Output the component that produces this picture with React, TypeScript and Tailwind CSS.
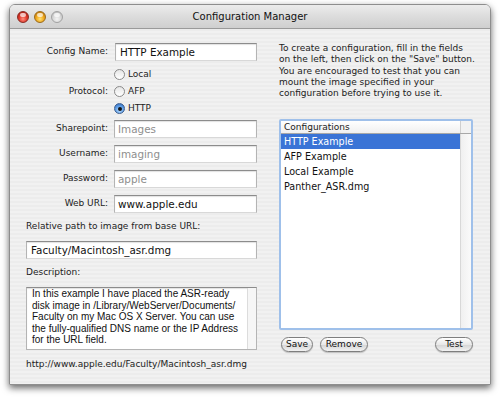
import React from "react";

const configs = ["HTTP Example", "AFP Example", "Local Example", "Panther_ASR.dmg"];

const descLines = [
  "In this example I have placed the ASR-ready",
  "disk image in /Library/WebServer/Documents/",
  "Faculty on my Mac OS X Server. You can use",
  "the fully-qualified DNS name or the IP Address",
  "for the URL field.",
];

const helpLines = [
  "To create a configuration, fill in the fields",
  'on the left, then click on the "Save" button.',
  "You are encouraged to test that you can",
  "mount the image specified in your",
  "configuration before trying to use it.",
];

function Light({ color }: { color: "red" | "yellow" | "gray" }) {
  const cls =
    color === "red"
      ? "bg-[radial-gradient(circle_at_50%_70%,#ff8f80_0%,#e0392b_45%,#9c1a10_100%)] border-[#8a2a22]"
      : color === "yellow"
      ? "bg-[radial-gradient(circle_at_50%_70%,#ffe27a_0%,#f0a81c_45%,#b06a08_100%)] border-[#9a6a1c]"
      : "bg-[radial-gradient(circle_at_50%_70%,#f4f4f4_0%,#d6d6d6_50%,#b4b4b4_100%)] border-[#a2a2a2]";
  return (
    <div className={`relative w-[12px] h-[12px] rounded-full border ${cls}`}>
      <div className="absolute left-[2px] top-[1px] w-[6px] h-[4px] rounded-full bg-white/70" />
    </div>
  );
}

function Field({ value, muted, className = "" }: { value: string; muted?: boolean; className?: string }) {
  return (
    <div
      className={`h-[18px] bg-white border border-[#b4b4b4] border-t-[#8c8c8c] border-b-[#d8d8d8] shadow-[inset_0_1px_1px_rgba(0,0,0,0.12)] flex items-center pl-[3px] text-[10.4px] leading-none ${
        muted ? "text-[#8e8e8e]" : "text-[#111]"
      } ${className}`}
    >
      {value}
    </div>
  );
}

function Radio({ label, checked }: { label: string; checked?: boolean }) {
  return (
    <div className="h-[17px] flex items-center gap-[3px]">
      {checked ? (
        <div className="w-[11px] h-[11px] rounded-full border border-[#3d5f8f] bg-[radial-gradient(circle_at_50%_70%,#bfe0ff_0%,#5a9be6_55%,#2c5fae_100%)] flex items-center justify-center">
          <div className="w-[4px] h-[4px] rounded-full bg-[#111]" />
        </div>
      ) : (
        <div className="w-[11px] h-[11px] rounded-full border border-[#8a8a8a] bg-[linear-gradient(#e6e6e6,#ffffff)]" />
      )}
      <span className="text-[9px] text-[#222]">{label}</span>
    </div>
  );
}

function PillButton({ label, width }: { label: string; width: string }) {
  return (
    <div
      className={`${width} h-[15px] rounded-full border border-[#7e7e7e] bg-[linear-gradient(#ffffff,#e8e8e8_50%,#d6d6d6_55%,#f2f2f2)] shadow-[0_1px_1px_rgba(0,0,0,0.2)] flex items-center justify-center text-[9px] text-[#111]`}
    >
      {label}
    </div>
  );
}

export default function App() {
  return (
    <div className="w-[500px] h-[398px] bg-white pt-[4px] pl-[9px] font-['DejaVu_Sans',sans-serif] text-[#222]">
      <div className="w-[482px] h-[381px] rounded-t-[6px] border border-[#8e8e8e] shadow-[0_3px_7px_rgba(0,0,0,0.6)] flex flex-col overflow-hidden">
        {/* title bar */}
        <div className="h-[24px] shrink-0 flex items-center border-b border-[#9a9a9a] bg-[linear-gradient(#ececec,#dcdcdc_50%,#cfcfcf)] px-[7px]">
          <div className="w-[60px] flex items-center gap-[5px]">
            <Light color="red" />
            <Light color="yellow" />
            <Light color="gray" />
          </div>
          <div className="flex-1 text-center text-[10px] text-[#111]">Configuration Manager</div>
          <div className="w-[60px]" />
        </div>

        {/* body */}
        <div className="flex-1 flex pl-[16px] pt-[14px] bg-[repeating-linear-gradient(to_bottom,#ececec_0px,#ececec_2px,#f1f1f1_2px,#f1f1f1_4px)]">
          {/* left column */}
          <div className="w-[231px] flex flex-col">
            <div className="grid grid-cols-[82px_143px] gap-x-[6px] items-center">
              <div className="text-right text-[9px]">Config Name:</div>
              <Field value="HTTP Example" className="ml-[1px] pl-[4px]" />
            </div>

            <div className="grid grid-cols-[82px_143px] gap-x-[6px] items-center mt-[5px]">
              <div />
              <Radio label="Local" />
              <div className="text-right text-[9px]">Protocol:</div>
              <Radio label="AFP" />
              <div />
              <Radio label="HTTP" checked />
            </div>

            <div className="grid grid-cols-[82px_143px] gap-x-[6px] gap-y-[7px] items-center mt-[3px]">
              <div className="text-right text-[9px]">Sharepoint:</div>
              <Field value="Images" muted />
              <div className="text-right text-[9px]">Username:</div>
              <Field value="imaging" muted />
              <div className="text-right text-[9px]">Password:</div>
              <Field value="apple" muted />
              <div className="text-right text-[9px]">Web URL:</div>
              <Field value="www.apple.edu" />
            </div>

            <div className="mt-[7px] h-[12px] leading-[12px] text-[9px]">
              Relative path to image from base URL:
            </div>
            <Field value="Faculty/Macintosh_asr.dmg" className="mt-[9px] pl-[4px]" />

            <div className="mt-[7px] h-[12px] leading-[12px] text-[9px]">Description:</div>

            <div className="mt-[9px] h-[63px] flex bg-white border border-[#b4b4b4] border-t-[#8c8c8c] shadow-[inset_0_1px_1px_rgba(0,0,0,0.12)] overflow-hidden">
              <div className="flex-1 pl-[5px] font-['Liberation_Sans',Arial,sans-serif] text-[10px] leading-[11.5px] text-[#111]">
                {descLines.map((line) => (
                  <div key={line} className="whitespace-nowrap">
                    {line}
                  </div>
                ))}
              </div>
              <div className="w-[9px] border-l border-[#dcdcdc] bg-[#f6f6f6]" />
            </div>

            <div className="mt-[8px] h-[12px] leading-[12px] text-[9px] whitespace-nowrap">
              http://www.apple.edu/Faculty/Macintosh_asr.dmg
            </div>
          </div>

          {/* right column */}
          <div className="w-[194px] ml-[22px] flex flex-col">
            <div className="text-[9px] leading-[11.25px] text-[#222]">
              {helpLines.map((line) => (
                <div key={line} className="whitespace-nowrap">
                  {line}
                </div>
              ))}
            </div>

            <div className="mt-[20px] h-[211px] rounded-[2px] border-2 border-[#9fc0ea] bg-white flex flex-col overflow-hidden">
              <div className="h-[13px] shrink-0 flex border-b border-[#a8a8a8] bg-[linear-gradient(#ffffff,#f0f0f0)]">
                <div className="flex-1 pl-[3px] text-[9px] leading-[13px]">Configurations</div>
                <div className="w-[11px] border-l border-[#cfcfcf] bg-[#f2f2f2]" />
              </div>
              <div className="flex-1 flex">
                <div className="flex-1">
                  {configs.map((c, i) => (
                    <div
                      key={c}
                      className={`h-[15px] pl-[3px] flex items-center text-[9.6px] ${
                        i === 0 ? "bg-[#3a74d6] text-white" : "text-[#111]"
                      }`}
                    >
                      {c}
                    </div>
                  ))}
                </div>
                <div className="w-[11px] border-l border-[#d8d8d8] bg-[linear-gradient(to_right,#f0f0f0,#fafafa)]" />
              </div>
            </div>

            <div className="mt-[7px] flex items-center pl-[2px]">
              <PillButton label="Save" width="w-[32px]" />
              <div className="ml-[7px]">
                <PillButton label="Remove" width="w-[48px]" />
              </div>
              <div className="flex-1" />
              <PillButton label="Test" width="w-[38px]" />
            </div>
          </div>
        </div>
      </div>
    </div>
  );
}
